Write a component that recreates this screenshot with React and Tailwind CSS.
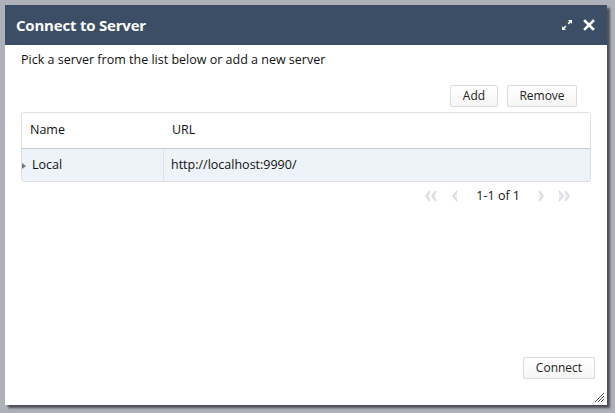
const rows = [{ name: 'Local', url: 'http://localhost:9990/' }];

function Btn({ children, className = '' }) {
  return (
    <button
      className={`h-[22px] rounded-[2px] border border-[#dcdcdc] bg-gradient-to-b from-white to-[#f6f6f6] text-[12px] text-[#222] ${className}`}
    >
      {children}
    </button>
  );
}

function Arrow({ dir = 'left', double = false }) {
  const one = dir === 'left' ? 'M6 2L2 7l4 5' : 'M2 2l4 5-4 5';
  const two = dir === 'left' ? 'M12 2L8 7l4 5' : 'M8 2l4 5-4 5';
  return (
    <svg width={double ? 15 : 9} height="14" viewBox={double ? '0 0 15 14' : '0 0 9 14'} fill="#eef0f3" stroke="#d5d8dd" strokeWidth="1.6" strokeLinejoin="round">
      <path d={one} />
      {double && <path d={two} />}
    </svg>
  );
}

export default function App() {
  return (
    <div
      className="w-[615px] h-[413px] bg-[#aeb1b9] pt-[5px] pl-[5px]"
      style={{ fontFamily: '"Open Sans", "Liberation Sans", sans-serif' }}
    >
      <div className="w-[602px] h-[400px] bg-white flex flex-col shadow-[3px_3px_2px_rgba(0,0,0,0.55)] relative">
        <div className="h-[40px] bg-[#3c4e66] flex items-center pl-[11px] pr-[12px] shrink-0">
          <span className="text-white font-bold text-[15px] tracking-[-0.2px]">Connect to Server</span>
          <div className="ml-auto flex items-center gap-[10px]">
            <svg width="12" height="12" viewBox="0 0 12 12" fill="white">
              <path d="M7 1h4v4L9.6 3.6 7.8 5.4 6.6 4.2 8.4 2.4z" />
              <path d="M5 11H1V7l1.4 1.4 1.8-1.8 1.2 1.2-1.8 1.8z" />
            </svg>
            <svg width="12" height="12" viewBox="0 0 12 12" stroke="white" strokeWidth="2.6" strokeLinecap="square">
              <path d="M2 2l8 8M10 2l-8 8" />
            </svg>
          </div>
        </div>

        <div className="flex-1 flex flex-col px-[16px] text-[12.5px] text-[#111]">
          <p className="mt-[6px] leading-[18px]">Pick a server from the list below or add a new server</p>

          <div className="flex justify-end gap-[9px] mt-[16px] pr-[14px]">
            <Btn className="w-[48px]">Add</Btn>
            <Btn className="w-[70px]">Remove</Btn>
          </div>

          <div className="mt-[5px] border border-[#dedfe2] rounded-[3px] overflow-hidden">
            <div className="flex h-[36px] items-center border-b border-[#c9cbd0] bg-white">
              <div className="w-[142px] pl-[8px]">Name</div>
              <div className="pl-[8px]">URL</div>
            </div>
            {rows.map((r) => (
              <div key={r.name} className="flex h-[32px] items-center bg-[#eef2f9] relative">
                <span className="absolute left-0 top-[14px] w-0 h-0 border-y-[3px] border-y-transparent border-l-[4px] border-l-[#777]" />
                <div className="w-[142px] h-full flex items-center pl-[10px] border-r border-[#dde0e6]">{r.name}</div>
                <div className="pl-[7px]">{r.url}</div>
              </div>
            ))}
          </div>

          <div className="flex justify-end items-center mt-[4px] pr-[19px] h-[20px]">
            <Arrow dir="left" double />
            <span className="ml-[12px]"><Arrow dir="left" /></span>
            <span className="text-[#111] ml-[16px] mr-[17px] text-[12.5px]">1-1 of 1</span>
            <Arrow dir="right" />
            <span className="ml-[11px]"><Arrow dir="right" double /></span>
          </div>

          <div className="mt-auto mb-[26px] flex justify-end">
            <Btn className="w-[72px] -mr-[4px]">Connect</Btn>
          </div>
        </div>

        <svg className="absolute right-[2px] bottom-[2px]" width="11" height="11" viewBox="0 0 11 11" stroke="#555" strokeWidth="1">
          <path d="M1 10L10 1M4 10L10 4M7 10L10 7" />
        </svg>
      </div>
    </div>
  );
}
